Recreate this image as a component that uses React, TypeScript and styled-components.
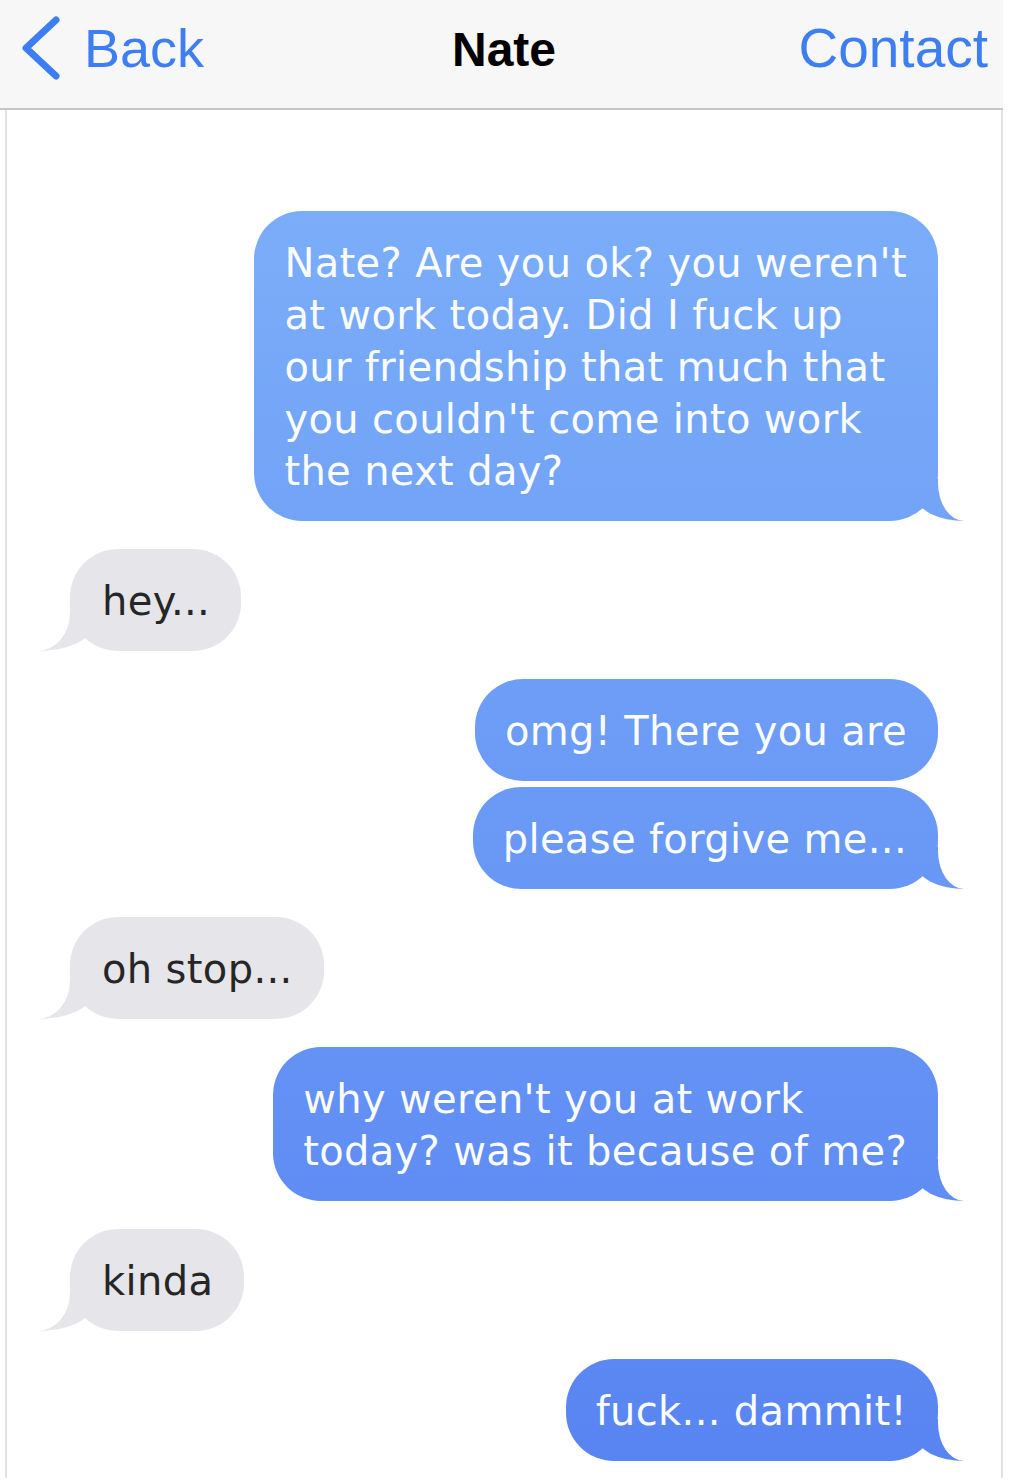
import React from "react";
import styled, { createGlobalStyle, css } from "styled-components";

type Sender = "me" | "them";

interface Message {
  id: number;
  from: Sender;
  lines: string[];
  grouped?: boolean;
  tail?: boolean;
}

const messages: Message[] = [
  {
    id: 1,
    from: "me",
    tail: true,
    lines: [
      "Nate? Are you ok? you weren't",
      "at work today. Did I fuck up",
      "our friendship that much that",
      "you couldn't come into work",
      "the next day?",
    ],
  },
  { id: 2, from: "them", tail: true, lines: ["hey..."] },
  { id: 3, from: "me", lines: ["omg! There you are"] },
  { id: 4, from: "me", grouped: true, tail: true, lines: ["please forgive me..."] },
  { id: 5, from: "them", tail: true, lines: ["oh stop..."] },
  {
    id: 6,
    from: "me",
    tail: true,
    lines: ["why weren't you at work", "today? was it because of me?"],
  },
  { id: 7, from: "them", tail: true, lines: ["kinda"] },
  { id: 8, from: "me", tail: true, lines: ["fuck... dammit!"] },
];

const GlobalStyle = createGlobalStyle`
  html, body {
    margin: 0;
    padding: 0;
    background: #ffffff;
  }
  body {
    font-family: "DejaVu Sans", Verdana, sans-serif;
  }
`;

const Screen = styled.div`
  width: 1013px;
  min-height: 1478px;
  background: #ffffff;
  overflow: hidden;
`;

const NavBar = styled.header`
  display: grid;
  grid-template-columns: 1fr auto 1fr;
  align-items: center;
  width: 1003px;
  height: 110px;
  box-sizing: border-box;
  padding: 0 15px 12px 20px;
  background: #f7f7f7;
  border-bottom: 2px solid #c6c6c6;
  font-family: "Liberation Sans", Arial, sans-serif;
`;

const BackLink = styled.div`
  display: flex;
  align-items: center;
  gap: 22px;
  justify-self: start;
  color: #3d7ef2;
  font-size: 54px;
  line-height: 1;
`;

const Title = styled.div`
  color: #000000;
  font-size: 48px;
  font-weight: 700;
  line-height: 1;
  padding-top: 4px;
`;

const ContactLink = styled.div`
  justify-self: end;
  color: #3d7ef2;
  font-size: 55px;
  line-height: 1;
`;

const Thread = styled.main`
  display: flex;
  flex-direction: column;
  margin-left: 5px;
  width: 998px;
  min-height: 1368px;
  box-sizing: border-box;
  padding: 101px 63px 16px 63px;
  border-left: 2px solid #e2e2e2;
  border-right: 2px solid #e2e2e2;
`;

const Row = styled.div<{ $from: Sender; $grouped?: boolean }>`
  display: flex;
  justify-content: ${(p) => (p.$from === "me" ? "flex-end" : "flex-start")};
  margin-top: ${(p) => (p.$grouped ? 6 : 28)}px;

  &:first-child {
    margin-top: 0;
  }
`;

const meTail = css`
  &::before {
    content: "";
    position: absolute;
    z-index: -1;
    bottom: 0;
    right: -27px;
    width: 48px;
    height: 42px;
    background: inherit;
    border-bottom-left-radius: 48px 24px;
  }
  &::after {
    content: "";
    position: absolute;
    z-index: -1;
    bottom: 0;
    right: -40px;
    width: 40px;
    height: 46px;
    background: #ffffff;
    border-bottom-left-radius: 26px 38px;
  }
`;

const themTail = css`
  &::before {
    content: "";
    position: absolute;
    z-index: -1;
    bottom: 0;
    left: -33px;
    width: 54px;
    height: 42px;
    background: inherit;
    border-bottom-right-radius: 54px 24px;
  }
  &::after {
    content: "";
    position: absolute;
    z-index: -1;
    bottom: 0;
    left: -46px;
    width: 46px;
    height: 46px;
    background: #ffffff;
    border-bottom-right-radius: 32px 38px;
  }
`;

const Bubble = styled.div<{ $from: Sender; $tail?: boolean }>`
  position: relative;
  isolation: isolate;
  padding: 26px 31px 24px 30px;
  border-radius: 48px;
  font-size: 40px;
  line-height: 52px;
  letter-spacing: 0.35px;

  ${(p) =>
    p.$from === "me"
      ? css`
          color: #fbfcff;
          background: linear-gradient(180deg, #80b4fa 0px, #5884f2 1478px);
          background-attachment: fixed;
          ${p.$tail && meTail}
        `
      : css`
          color: #262626;
          background: #e5e5ea;
          padding-left: 32px;
          padding-right: 31px;
          ${p.$tail && themTail}
        `}
`;

const Line = styled.span`
  display: block;
  white-space: nowrap;
`;

function Chevron() {
  return (
    <svg width="42" height="64" viewBox="0 0 42 64" aria-hidden="true">
      <polyline
        points="36,4 6,32 36,60"
        fill="none"
        stroke="#3d7ef2"
        strokeWidth="7"
        strokeLinecap="round"
        strokeLinejoin="round"
      />
    </svg>
  );
}

export default function App() {
  return (
    <>
      <GlobalStyle />
      <Screen>
        <NavBar>
          <BackLink>
            <Chevron />
            <span>Back</span>
          </BackLink>
          <Title>Nate</Title>
          <ContactLink>Contact</ContactLink>
        </NavBar>
        <Thread>
          {messages.map((m) => (
            <Row key={m.id} $from={m.from} $grouped={m.grouped}>
              <Bubble $from={m.from} $tail={m.tail}>
                {m.lines.map((line, i) => (
                  <Line key={i}>{line}</Line>
                ))}
              </Bubble>
            </Row>
          ))}
        </Thread>
      </Screen>
    </>
  );
}
